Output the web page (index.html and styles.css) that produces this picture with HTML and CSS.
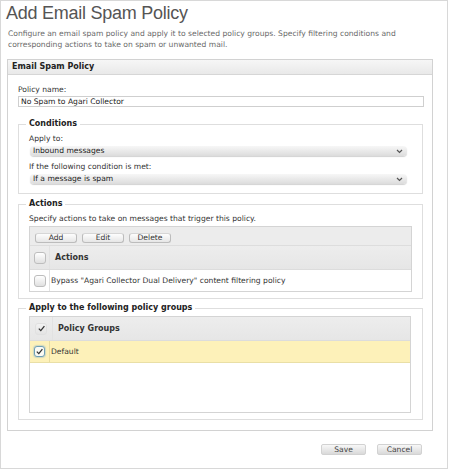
FILE: index.html
```html
<!DOCTYPE html>
<html lang="en">
<head>
<meta charset="utf-8">
<title>Add Email Spam Policy</title>
<link rel="stylesheet" href="styles.css">
</head>
<body>
<div class="page">
  <h1 class="title">Add Email Spam Policy</h1>
  <p class="intro">Configure an email spam policy and apply it to selected policy groups. Specify filtering conditions and corresponding actions to take on spam or unwanted mail.</p>

  <section class="panel">
    <div class="panel-head">Email Spam Policy</div>
    <div class="panel-body">
      <div class="field-label">Policy name:</div>
      <div class="text-input">No Spam to Agari Collector</div>

      <fieldset class="group group-conditions">
        <legend class="group-legend">Conditions</legend>
        <div class="field-label cond-label">Apply to:</div>
        <div class="select">
          <span class="select-text">Inbound messages</span>
          <svg class="chev" width="7" height="5" viewBox="0 0 7 5"><path d="M1 1 L3.5 3.5 L6 1" fill="none" stroke="#555" stroke-width="1.2"/></svg>
        </div>
        <div class="field-label cond-label cond-label-2">If the following condition is met:</div>
        <div class="select">
          <span class="select-text">If a message is spam</span>
          <svg class="chev" width="7" height="5" viewBox="0 0 7 5"><path d="M1 1 L3.5 3.5 L6 1" fill="none" stroke="#555" stroke-width="1.2"/></svg>
        </div>
      </fieldset>

      <fieldset class="group group-actions">
        <legend class="group-legend">Actions</legend>
        <div class="field-label actions-note">Specify actions to take on messages that trigger this policy.</div>
        <div class="grid">
          <div class="toolbar">
            <button class="tb-btn">Add</button>
            <button class="tb-btn">Edit</button>
            <button class="tb-btn">Delete</button>
          </div>
          <div class="grid-head">
            <div class="cell-check"><span class="check"></span></div>
            <div class="cell-text head-text">Actions</div>
          </div>
          <div class="grid-row">
            <div class="cell-check"><span class="check"></span></div>
            <div class="cell-text">Bypass "Agari Collector Dual Delivery" content filtering policy</div>
          </div>
        </div>
      </fieldset>

      <fieldset class="group group-apply">
        <legend class="group-legend">Apply to the following policy groups</legend>
        <div class="grid grid-groups">
          <div class="grid-head">
            <div class="cell-check cell-check-wide"><span class="check check-plain"><svg width="9" height="9" viewBox="0 0 9 9"><path d="M1.8 4.6 L3.8 6.6 L7.4 2.2" fill="none" stroke="#333" stroke-width="1.3"/></svg></span></div>
            <div class="cell-text head-text">Policy Groups</div>
          </div>
          <div class="grid-row row-selected">
            <div class="cell-check"><span class="check check-on"><svg width="9" height="9" viewBox="0 0 9 9"><path d="M1.8 4.6 L3.8 6.6 L7.4 2.2" fill="none" stroke="#333" stroke-width="1.3"/></svg></span></div>
            <div class="cell-text">Default</div>
          </div>
          <div class="grid-empty"></div>
        </div>
      </fieldset>
    </div>
  </section>

  <div class="footer">
    <button class="foot-btn">Save</button>
    <button class="foot-btn">Cancel</button>
  </div>
</div>
</body>
</html>
```

FILE: styles.css
```css
html, body {
  margin: 0;
  padding: 0;
  background: #ffffff;
}

body {
  font-family: "DejaVu Sans", Verdana, sans-serif;
  font-size: 7.6px;
  color: #333333;
}

.page {
  box-sizing: border-box;
  width: 448px;
  height: 469px;
  border: 1px solid #d8d8d8;
  padding: 0 14px 0 6px;
}

.title {
  margin: 2px 0 0 -1px;
  font-family: "Liberation Sans", Arial, sans-serif;
  font-weight: normal;
  font-size: 18px;
  line-height: 20px;
  letter-spacing: -0.25px;
  color: #555555;
}

.intro {
  margin: 5px 0 0 1px;
  width: 412px;
  line-height: 11px;
  color: #6a6a6a;
}

.panel {
  margin-top: 9px;
  border: 1px solid #d2d2d2;
  background: #ffffff;
}

.panel-head {
  height: 14px;
  line-height: 13px;
  padding-left: 4px;
  font-weight: bold;
  font-size: 8px;
  color: #222222;
  background: linear-gradient(#f6f6f6, #e9e9e9);
  border-bottom: 1px solid #d6d6d6;
}

.panel-body {
  padding: 10px 9px 10px 10px;
}

.field-label {
  line-height: 10px;
  color: #333333;
}

.text-input {
  box-sizing: border-box;
  margin-top: 1px;
  height: 11px;
  width: calc(100% + 1px);
  border: 1px solid #cfcfcf;
  padding-left: 2px;
  line-height: 9px;
  color: #222222;
}

.group {
  margin: 12px 0 0 0;
  padding: 0 10px 6px 10px;
  border: 1px solid #dedede;
  min-width: 0;
}

.group-legend {
  padding: 0 3px;
  margin-left: -3px;
  line-height: 10px;
  font-weight: bold;
  font-size: 8px;
  color: #222222;
}

.group-conditions {
  padding-bottom: 9px;
}

.cond-label {
  margin-top: 5px;
}

.cond-label-2 {
  margin-top: 6px;
}

.select {
  display: flex;
  align-items: center;
  justify-content: space-between;
  box-sizing: border-box;
  margin: 2px 5px 0 1px;
  height: 10px;
  padding: 0 4px 0 3px;
  border-radius: 4px;
  background: linear-gradient(#f7f7f7, #dcdcdc);
  box-shadow: 0 1px 1px rgba(0, 0, 0, 0.18);
  color: #222222;
}

.select-text {
  line-height: 10px;
}

.chev {
  display: block;
}

.group-actions {
  margin-top: 5px;
}

.actions-note {
  margin-top: 5px;
}

.grid {
  margin-top: 2px;
  border: 1px solid #d4d4d4;
}

.toolbar {
  display: flex;
  gap: 5px;
  height: 19px;
  box-sizing: border-box;
  padding: 6px 0 0 5px;
  background: #ececec;
  border-bottom: 1px solid #dddddd;
}

.tb-btn {
  box-sizing: border-box;
  width: 42px;
  height: 10px;
  padding: 0;
  border: 1px solid #bcbcbc;
  border-top-color: #d6d6d6;
  border-radius: 3px;
  background: linear-gradient(#fdfdfd, #e6e6e6);
  font-family: "DejaVu Sans", Verdana, sans-serif;
  font-size: 7.6px;
  line-height: 8px;
  color: #333333;
}

.grid-head {
  display: flex;
  height: 23px;
  background: linear-gradient(#ededed, #e6e6e6);
  border-bottom: 1px solid #dcdcdc;
}

.grid-row {
  display: flex;
  height: 21px;
  background: #ffffff;
}

.cell-check {
  display: flex;
  align-items: center;
  box-sizing: border-box;
  width: 20px;
  padding-left: 4px;
  border-right: 1px solid #e2e2e2;
}

.cell-check-wide {
  width: 23px;
  padding-left: 5px;
}

.cell-text {
  display: flex;
  align-items: center;
  padding-left: 1px;
  color: #333333;
}

.head-text {
  padding-left: 5px;
  font-weight: bold;
  font-size: 8px;
  color: #333333;
}

.check {
  box-sizing: border-box;
  display: flex;
  align-items: center;
  justify-content: center;
  width: 12px;
  height: 12px;
  border: 1px solid #bdbdbd;
  border-radius: 3px;
  background: linear-gradient(#ffffff, #e0e0e0);
}

.check-plain {
  border-color: #e0e0e0;
  background: linear-gradient(#f2f2f2, #e4e4e4);
}

.check-on {
  width: 11px;
  height: 11px;
  border: 1px solid #6f9fb6;
  background: #fbfbf4;
  box-shadow: 0 0 1px 1px rgba(120, 170, 200, 0.35);
}

.row-selected {
  background: #fdf1b9;
  border-bottom: 1px solid #e9dfa6;
}

.row-selected .cell-check {
  border-right-color: #e8dca0;
}

.grid-empty {
  height: 49px;
  background: #ffffff;
}

.group-apply {
  margin-top: 4px;
}

.group-apply .grid {
  margin-top: 3px;
  margin-right: 1px;
}

.footer {
  display: flex;
  justify-content: flex-end;
  gap: 11px;
  margin: 13px 11px 0 0;
}

.foot-btn {
  box-sizing: border-box;
  width: 45px;
  height: 11px;
  padding: 0;
  border: 1px solid #d2d2d2;
  border-radius: 2px;
  background: linear-gradient(#f8f8f8, #d9d9d9);
  font-family: "DejaVu Sans", Verdana, sans-serif;
  font-size: 7.6px;
  line-height: 9px;
  color: #444444;
}
```
